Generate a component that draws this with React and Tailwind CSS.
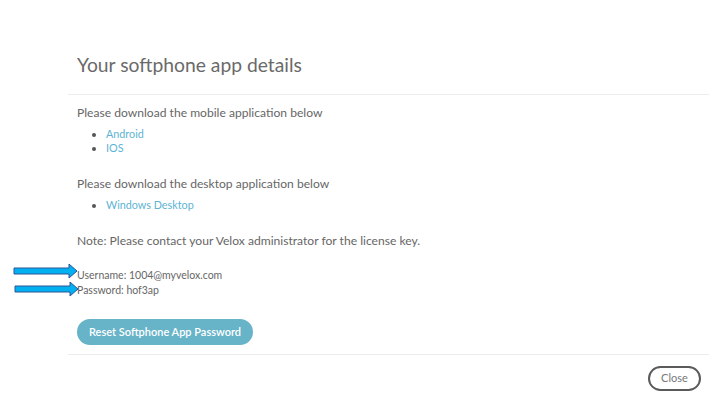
export default function App() {
  const Arrow = ({ className }) => (
    <svg className={className} width="66" height="16" viewBox="0 0 66 16">
      <polygon points="1,5 56,5 56,1 64,8 56,15 56,11 1,11" fill="#00b0f0" stroke="#2f5597" strokeWidth="1" />
    </svg>
  );
  return (
    <div className="relative w-[716px] h-[398px] bg-white text-[#666666]" style={{ fontFamily: 'Lato, "Noto Sans", sans-serif' }}>
      <div className="pl-[68px] pr-[7px] pt-[52px]">
        <div className="pl-[9px] pb-[16px] text-[19.3px] leading-[26px] text-[#6a6a6a]">Your softphone app details</div>
        <div className="border-t border-[#ececec]" />
        <div className="pl-[9px] pt-[11px] text-[12.1px] leading-[14px]">
          <p>Please download the mobile application below</p>
          <ul className="list-disc pl-[29px] mt-[7px] text-[10.8px] leading-[14px] text-[#5db3d3] marker:text-[#555]">
            <li>Android</li>
            <li>IOS</li>
          </ul>
          <p className="mt-[22px]">Please download the desktop application below</p>
          <ul className="list-disc pl-[29px] mt-[7px] text-[10.8px] leading-[14px] text-[#5db3d3] marker:text-[#555]">
            <li>Windows Desktop</li>
          </ul>
          <p className="mt-[22px]">Note: Please contact your Velox administrator for the license key.</p>
          <div className="mt-[20px] text-[10.5px] leading-[15px]">
            <p>Username: 1004@myvelox.com</p>
            <p>Password: hof3ap</p>
          </div>
          <button className="mt-[21px] h-[26px] w-[176px] rounded-full bg-[#67b3c8] text-white text-[11px] font-semibold">Reset Softphone App Password</button>
        </div>
        <div className="mt-[9px] border-t border-[#ececec]" />
        <div className="flex justify-end pt-[11px] pr-[8px]">
          <button className="w-[53px] h-[25px] rounded-full border-2 border-[#5a5a5a] text-[11px] text-[#777]">Close</button>
        </div>
      </div>
      <Arrow className="absolute left-[13px] top-[263px]" />
      <Arrow className="absolute left-[14px] top-[281px]" />
    </div>
  );
}
